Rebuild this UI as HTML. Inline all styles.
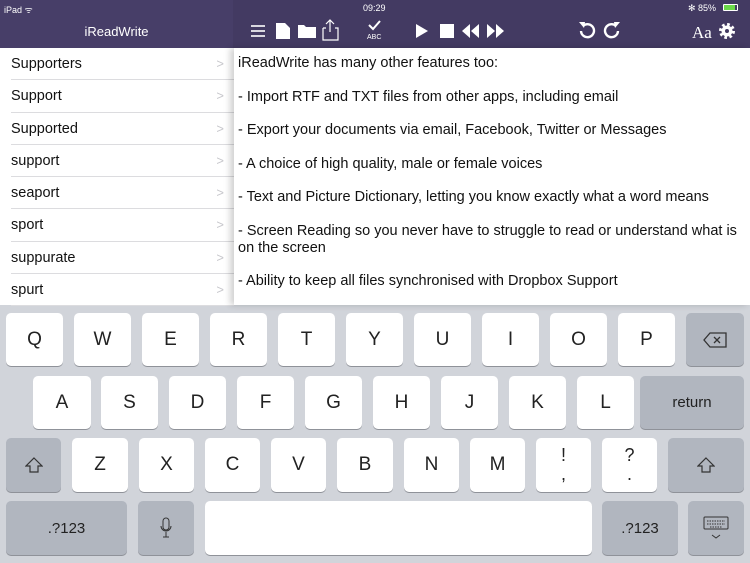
<!DOCTYPE html>
<html><head><meta charset="utf-8"><style>
*{margin:0;padding:0;box-sizing:border-box}
body{width:750px;height:563px;overflow:hidden;background:#d1d4da;font-family:"Liberation Sans",sans-serif;position:relative}
.hdr{position:absolute;left:0;top:0;width:750px;height:48px;background:#433a62}
.lh{position:absolute;left:0;top:0;width:233px;height:48px;background:#473e68}
.st{position:absolute;color:#fff;font-size:9px;top:3px}
.title{position:absolute;left:0;width:233px;top:24px;text-align:center;color:#fff;font-size:13px}
.list{position:absolute;left:0;top:48px;width:234px;height:257px;background:#fff}
.row{height:32.3px;position:relative;font-size:14.5px;color:#111;padding-left:11px;line-height:32px}
.row:after{content:"";position:absolute;left:11px;right:0;bottom:0;border-bottom:1px solid #dcdcdf}
.row span{position:absolute;right:10px;top:0;color:#c7c7cc;font-size:13px}
.doc{position:absolute;left:234px;top:48px;width:516px;height:257px;background:#fff;box-shadow:-4px 0 6px rgba(0,0,0,.18);font-size:14.5px;color:#111;padding:7px 4px;line-height:17px}
.doc p{margin-bottom:16.5px}
.k{position:absolute;background:#fff;border-radius:5px;box-shadow:0 1px 0 #8f9299;text-align:center;font-size:19px;color:#222;display:flex;align-items:center;justify-content:center}
.g{background:#b1b6bf}
</style></head><body>
<div class="hdr"></div><div class="lh"></div>
<div class="st" style="left:4px">iPad ᯤ</div>
<div class="st" style="left:363px">09:29</div>
<div class="st" style="left:688px">✻ 85%</div>
<div style="position:absolute;left:723px;top:4px;width:15px;height:7px;border:1px solid #fff;border-radius:1px"><div style="background:#6cd84a;width:11px;height:5px"></div></div>
<div class="title">iReadWrite</div>
<svg style="position:absolute;left:0;top:0" width="750" height="48" fill="#fff" stroke="#fff">
<g stroke-width="1.6"><line x1="251" y1="26" x2="265" y2="26"/><line x1="251" y1="31" x2="265" y2="31"/><line x1="251" y1="36" x2="265" y2="36"/></g>
<path d="M276 23h9l5 5v11h-14z" stroke="none"/>
<path d="M298 25h6l2 2h10v11h-18z" stroke="none"/>
<path d="M323 28h3M335 28h3v12h-15v-12M330 20v12M326 24l4-4 4 4" fill="none" stroke-width="1.2"/>
<path d="M369 25l4 4 7-8" fill="none" stroke-width="2"/>
<text x="367" y="39" font-size="7" stroke="none" font-family="Liberation Sans">ABC</text>
<path d="M416 24l12 7-12 7z" stroke="none"/>
<rect x="440" y="24" width="14" height="14" stroke="none"/>
<path d="M470 24l-8 7 8 7zM479 24l-8 7 8 7zM487 24l8 7-8 7zM496 24l8 7-8 7z" stroke="none"/>
<path d="M583 26a6.5 6.5 0 1 1-2 5" fill="none" stroke-width="2.4"/><path d="M579 22l6 0-1 6z" stroke="none"/>
<path d="M616 26a6.5 6.5 0 1 0 2 5" fill="none" stroke-width="2.4"/><path d="M620 22l-6 0 1 6z" stroke="none"/>
<text x="692" y="38" font-size="17" stroke="none" font-family="Liberation Serif">Aa</text>
<circle cx="727" cy="31" r="6" stroke="#fff" stroke-width="4" stroke-dasharray="2.4 2.3" fill="none"/><circle cx="727" cy="31" r="5.5" stroke="none"/><circle cx="727" cy="31" r="2" fill="#433a62" stroke="none"/>
</svg>
<div class="list">
<div class="row">Supporters<span>&gt;</span></div>
<div class="row">Support<span>&gt;</span></div>
<div class="row">Supported<span>&gt;</span></div>
<div class="row">support<span>&gt;</span></div>
<div class="row">seaport<span>&gt;</span></div>
<div class="row">sport<span>&gt;</span></div>
<div class="row">suppurate<span>&gt;</span></div>
<div class="row">spurt<span>&gt;</span></div>
</div>
<div class="doc">
<p>iReadWrite has many other features too:</p>
<p>- Import RTF and TXT files from other apps, including email</p>
<p>- Export your documents via email, Facebook, Twitter or Messages</p>
<p>- A choice of high quality, male or female voices</p>
<p>- Text and Picture Dictionary, letting you know exactly what a word means</p>
<p>- Screen Reading so you never have to struggle to read or understand what is on the screen</p>
<p>- Ability to keep all files synchronised with Dropbox Support</p>
</div>
<!-- row1 -->
<div class="k" style="left:6px;top:313px;width:57px;height:53px">Q</div>
<div class="k" style="left:74px;top:313px;width:57px;height:53px">W</div>
<div class="k" style="left:142px;top:313px;width:57px;height:53px">E</div>
<div class="k" style="left:210px;top:313px;width:57px;height:53px">R</div>
<div class="k" style="left:278px;top:313px;width:57px;height:53px">T</div>
<div class="k" style="left:346px;top:313px;width:57px;height:53px">Y</div>
<div class="k" style="left:414px;top:313px;width:57px;height:53px">U</div>
<div class="k" style="left:482px;top:313px;width:57px;height:53px">I</div>
<div class="k" style="left:550px;top:313px;width:57px;height:53px">O</div>
<div class="k" style="left:618px;top:313px;width:57px;height:53px">P</div>
<div class="k g" style="left:686px;top:313px;width:58px;height:53px"><svg width="24" height="16"><path d="M7 1h16v14H7L1 8z" fill="none" stroke="#333" stroke-width="1.3"/><path d="M11 5l6 6M17 5l-6 6" stroke="#333" stroke-width="1.3"/></svg></div>
<!-- row2 -->
<div class="k" style="left:33px;top:376px;width:58px;height:53px">A</div>
<div class="k" style="left:101px;top:376px;width:57px;height:53px">S</div>
<div class="k" style="left:169px;top:376px;width:57px;height:53px">D</div>
<div class="k" style="left:237px;top:376px;width:57px;height:53px">F</div>
<div class="k" style="left:305px;top:376px;width:57px;height:53px">G</div>
<div class="k" style="left:373px;top:376px;width:57px;height:53px">H</div>
<div class="k" style="left:441px;top:376px;width:57px;height:53px">J</div>
<div class="k" style="left:509px;top:376px;width:57px;height:53px">K</div>
<div class="k" style="left:577px;top:376px;width:57px;height:53px">L</div>
<div class="k g" style="left:640px;top:376px;width:104px;height:53px;font-size:15px">return</div>
<!-- row3 -->
<div class="k g" style="left:6px;top:438px;width:55px;height:54px"><svg width="18" height="16"><path d="M9 1l8 8h-4v6H5V9H1z" fill="none" stroke="#333" stroke-width="1.2"/></svg></div>
<div class="k" style="left:72px;top:438px;width:56px;height:54px">Z</div>
<div class="k" style="left:139px;top:438px;width:55px;height:54px">X</div>
<div class="k" style="left:205px;top:438px;width:55px;height:54px">C</div>
<div class="k" style="left:271px;top:438px;width:55px;height:54px">V</div>
<div class="k" style="left:337px;top:438px;width:56px;height:54px">B</div>
<div class="k" style="left:404px;top:438px;width:55px;height:54px">N</div>
<div class="k" style="left:470px;top:438px;width:55px;height:54px">M</div>
<div class="k" style="left:536px;top:438px;width:55px;height:54px;flex-direction:column;line-height:19px;font-size:18px">!<br>,</div>
<div class="k" style="left:602px;top:438px;width:55px;height:54px;flex-direction:column;line-height:19px;font-size:18px">?<br>.</div>
<div class="k g" style="left:668px;top:438px;width:76px;height:54px"><svg width="18" height="16"><path d="M9 1l8 8h-4v6H5V9H1z" fill="none" stroke="#333" stroke-width="1.2"/></svg></div>
<!-- row4 -->
<div class="k g" style="left:6px;top:501px;width:121px;height:54px;font-size:15px">.?123</div>
<div class="k g" style="left:138px;top:501px;width:56px;height:54px"><svg width="12" height="22"><rect x="3" y="1" width="6" height="12" rx="3" fill="none" stroke="#333"/><path d="M1 9a5 5 0 0 0 10 0M6 15v5M3 20h6" fill="none" stroke="#333"/></svg></div>
<div class="k" style="left:205px;top:501px;width:387px;height:54px"></div>
<div class="k g" style="left:602px;top:501px;width:76px;height:54px;font-size:15px">.?123</div>
<div class="k g" style="left:688px;top:501px;width:56px;height:54px"><svg width="26" height="26"><rect x="1" y="2" width="24" height="12" rx="1" fill="none" stroke="#333"/><path d="M4 6h18M4 9h18M7 12h12" stroke="#333" stroke-dasharray="1.5 1"/><path d="M9 20l4 3 4-3" fill="none" stroke="#333"/></svg></div>
</body></html>
